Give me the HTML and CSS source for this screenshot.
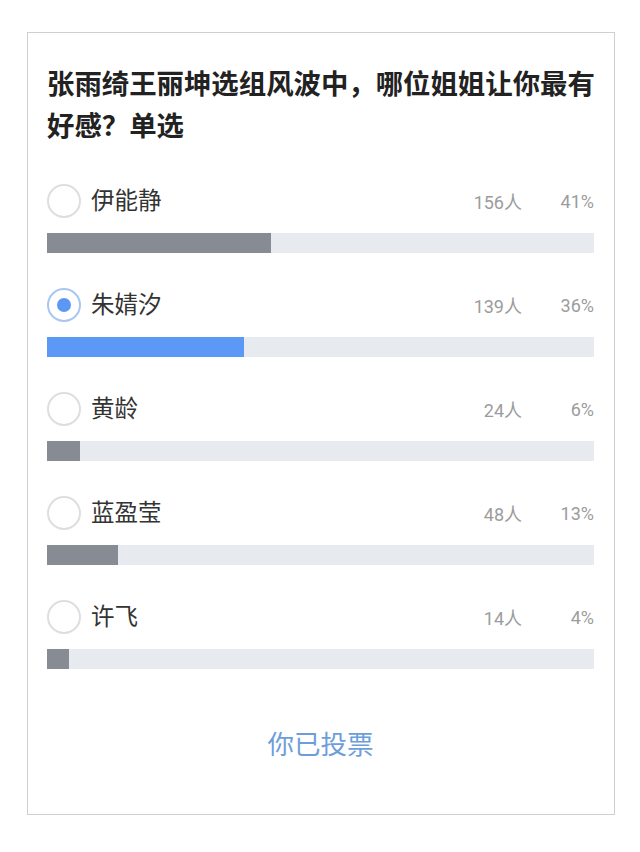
FILE: index.html
```html
<!DOCTYPE html>
<html lang="zh-CN">
<head>
<meta charset="utf-8">
<title>投票</title>
<link rel="stylesheet" href="styles.css">
</head>
<body>
<div class="card">
  <h1 class="title">张雨绮王丽坤选组风波中，哪位姐姐让你最有好感？单选</h1>
  <ul class="options">
    <li class="option">
      <div class="option-head">
        <span class="radio"></span>
        <span class="name">伊能静</span>
        <span class="count">156人</span>
        <span class="pct">41%</span>
      </div>
      <div class="track"><div class="fill" style="width:41%"></div></div>
    </li>
    <li class="option selected">
      <div class="option-head">
        <span class="radio"><span class="dot"></span></span>
        <span class="name">朱婧汐</span>
        <span class="count">139人</span>
        <span class="pct">36%</span>
      </div>
      <div class="track"><div class="fill" style="width:36%"></div></div>
    </li>
    <li class="option">
      <div class="option-head">
        <span class="radio"></span>
        <span class="name">黄龄</span>
        <span class="count">24人</span>
        <span class="pct">6%</span>
      </div>
      <div class="track"><div class="fill" style="width:6%"></div></div>
    </li>
    <li class="option">
      <div class="option-head">
        <span class="radio"></span>
        <span class="name">蓝盈莹</span>
        <span class="count">48人</span>
        <span class="pct">13%</span>
      </div>
      <div class="track"><div class="fill" style="width:13%"></div></div>
    </li>
    <li class="option">
      <div class="option-head">
        <span class="radio"></span>
        <span class="name">许飞</span>
        <span class="count">14人</span>
        <span class="pct">4%</span>
      </div>
      <div class="track"><div class="fill" style="width:4%"></div></div>
    </li>
  </ul>
  <div class="footer">你已投票</div>
</div>
</body>
</html>
```
FILE: styles.css
```css
html, body {
  margin: 0;
  padding: 0;
  background: #ffffff;
}
body {
  font-family: "Noto Sans CJK SC", "Noto Sans", sans-serif;
  color: #333333;
}
.card {
  box-sizing: border-box;
  width: 588px;
  height: 783px;
  margin: 32px 0 0 27px;
  border: 1px solid #cfcfcf;
  padding: 28px 20px 0 19px;
  display: flex;
  flex-direction: column;
}
.title {
  margin: 0 -8px 0 0;
  font-size: 27.4px;
  line-height: 42px;
  font-weight: bold;
  color: #222222;
}
.options {
  list-style: none;
  margin: 39px 0 0 0;
  padding: 0;
  display: flex;
  flex-direction: column;
  gap: 35px;
}
.option-head {
  display: flex;
  align-items: center;
  height: 34px;
}
.radio {
  box-sizing: border-box;
  width: 34px;
  height: 34px;
  border: 2px solid #dedede;
  border-radius: 50%;
  display: flex;
  align-items: center;
  justify-content: center;
  flex: none;
}
.selected .radio {
  border-color: #a9c6f2;
}
.dot {
  width: 14px;
  height: 14px;
  border-radius: 50%;
  background: #5b97f5;
}
.name {
  margin-left: 10px;
  font-size: 23.5px;
  line-height: 30px;
  color: #333333;
  flex: 1;
  position: relative;
  top: -2px;
}
.count, .pct {
  font-family: Roboto, "Noto Sans CJK SC", sans-serif;
  font-size: 18px;
  color: #9c9c9c;
  text-align: right;
}
.pct {
  width: 72px;
  flex: none;
}
.track {
  margin-top: 15px;
  height: 20px;
  background: #e7eaef;
}
.fill {
  height: 100%;
  background: #878b94;
}
.selected .fill {
  background: #5c98f6;
}
.footer {
  margin-top: 58px;
  text-align: center;
  font-size: 26.5px;
  line-height: 32px;
  color: #6d9edb;
}
```
